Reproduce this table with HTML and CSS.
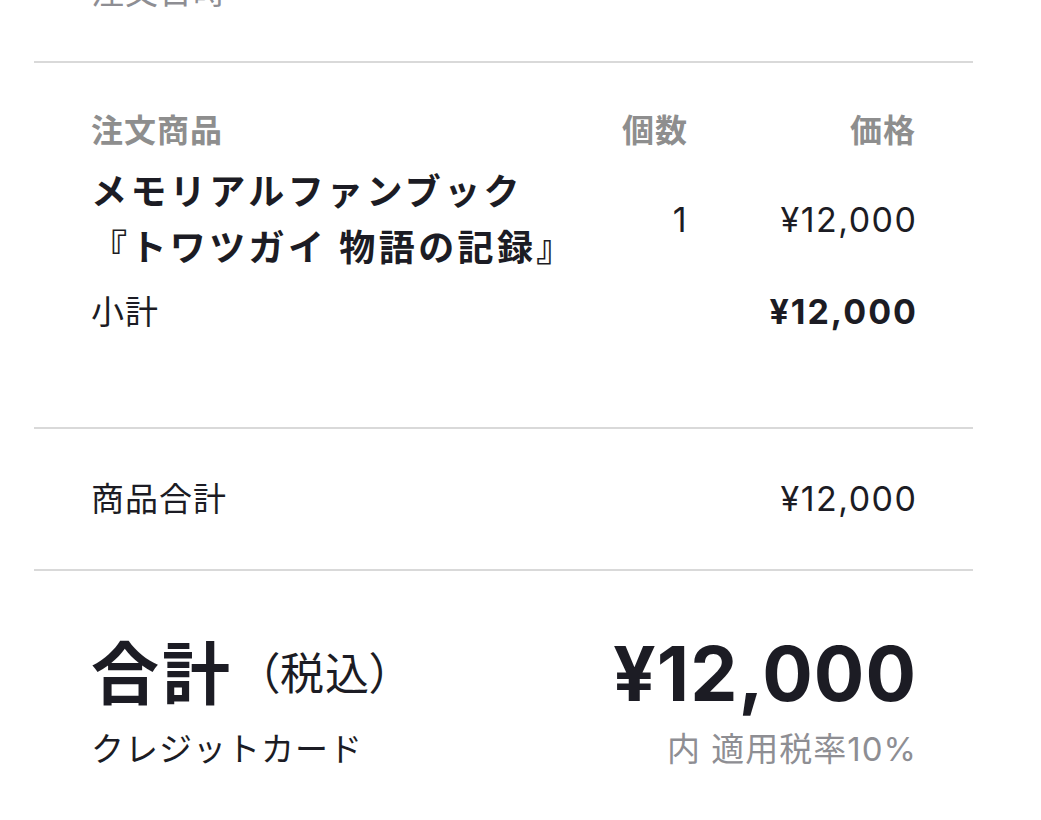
FILE: index.html
```html
<!DOCTYPE html>
<html lang="ja">
<head>
<meta charset="utf-8">
<link rel="stylesheet" href="styles.css">
</head>
<body>
<div class="page">
  <section class="sec sec-top">
    <div class="label muted">注文日時</div>
  </section>
  <section class="sec sec-items">
    <div class="items">
      <div class="th">注文商品</div>
      <div class="th right">個数</div>
      <div class="th right">価格</div>
      <div class="name">メモリアルファンブック<br>『トワツガイ 物語の記録』</div>
      <div class="qty">1</div>
      <div class="price">¥12,000</div>
      <div class="sub-label">小計</div>
      <div class="sub-price">¥12,000</div>
    </div>
  </section>
  <section class="sec sec-sum">
    <div class="row">
      <span class="jp">商品合計</span>
      <span class="num">¥12,000</span>
    </div>
  </section>
  <section class="sec-total">
    <div class="total-row">
      <div class="total-label"><span class="big">合計</span><span class="tax">（税込）</span></div>
      <div class="total-price">¥12,000</div>
    </div>
    <div class="total-row2">
      <span class="jp">クレジットカード</span>
      <span class="muted rate">内 適用税率10%</span>
    </div>
  </section>
</div>
</body>
</html>
```
FILE: styles.css
```css
html, body {
  margin: 0;
  padding: 0;
  background: #ffffff;
}
body {
  font-family: Inter, "Noto Sans CJK JP", sans-serif;
  color: #1c1c24;
  overflow: hidden;
  height: 820px;
}
.page {
  margin: 0 68px 0 34px;
}
.sec {
  border-bottom: 2px solid #d9d9d9;
  padding: 0 57px;
}
.muted {
  color: #8e8e93;
}
.label {
  font-size: 33px;
  line-height: 40px;
  letter-spacing: 1px;
}
.sec-top {
  margin-top: -28px;
  padding-bottom: 49px;
}
.sec-items {
  padding-top: 48px;
  padding-bottom: 95px;
}
.items {
  display: grid;
  grid-template-columns: 1fr 120px 228px;
  align-items: center;
}
.th {
  font-size: 32px;
  line-height: 40px;
  font-weight: 600;
  letter-spacing: 1px;
  color: #8e8e8e;
  margin-bottom: 13px;
}
.right {
  text-align: right;
}
.name {
  font-size: 36px;
  line-height: 56px;
  font-weight: 700;
  letter-spacing: 3.4px;
}
.qty, .price, .num {
  font-size: 34px;
  line-height: 40px;
  letter-spacing: 1.5px;
  text-align: right;
}
.price, .num {
  margin-right: -1.5px;
}
.sub-label {
  grid-column: 1 / 3;
  font-size: 33px;
  line-height: 40px;
  letter-spacing: 1px;
  margin-top: 16px;
}
.sub-price {
  font-size: 34px;
  line-height: 40px;
  font-weight: 700;
  letter-spacing: 2px;
  margin-right: -2px;
  text-align: right;
  margin-top: 16px;
}
.sec-sum {
  padding-top: 50px;
  padding-bottom: 50px;
}
.row {
  display: flex;
  justify-content: space-between;
  align-items: center;
  line-height: 40px;
}
.jp {
  font-size: 33px;
  line-height: 40px;
  letter-spacing: 1px;
}
.sec-total {
  padding: 63px 57px 0;
}
.total-row {
  display: flex;
  justify-content: space-between;
  align-items: center;
  height: 80px;
}
.total-label {
  display: flex;
  align-items: center;
}
.big {
  font-size: 68px;
  line-height: 80px;
  font-weight: 700;
  letter-spacing: 3px;
}
.tax {
  font-size: 44px;
  line-height: 80px;
  font-feature-settings: "palt";
  margin-left: 24px;
  letter-spacing: 1px;
}
.total-price {
  font-size: 75px;
  line-height: 80px;
  font-weight: 700;
  letter-spacing: 1px;
  margin-right: -1px;
}
.total-row2 {
  display: flex;
  justify-content: space-between;
  align-items: center;
  margin-top: 15px;
}
.rate {
  font-size: 33px;
  line-height: 40px;
  letter-spacing: 1px;
  margin-right: -1px;
}
```
